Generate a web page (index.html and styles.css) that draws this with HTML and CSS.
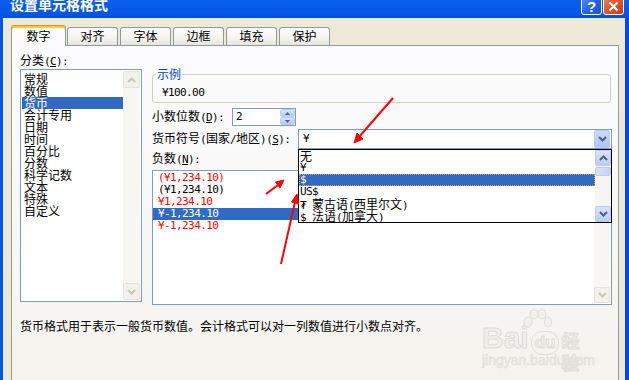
FILE: index.html
```html
<!DOCTYPE html>
<html lang="zh-CN">
<head>
  <meta charset="UTF-8">
  <title>设置单元格格式</title>
  <link rel="stylesheet" href="styles.css">
</head>
<body>

<div class="window">
  <!-- 标题栏 -->
  <div class="titlebar">
    <span class="title">设置单元格格式</span>
    <span class="tbtn help">?</span>
    <span class="tbtn close">
      <svg width="11" height="11" viewBox="0 0 11 11"><path d="M1.5 1.5 L9.5 9.5 M9.5 1.5 L1.5 9.5" stroke="#fff" stroke-width="2.2"/></svg>
    </span>
  </div>

  <div class="dlg">
    <div class="tabs">
      <div class="tab active">数字</div>
      <div class="tab">对齐</div>
      <div class="tab">字体</div>
      <div class="tab">边框</div>
      <div class="tab">填充</div>
      <div class="tab">保护</div>
    </div>

    <div class="panel">
      <div class="cols">
        <!-- 分类 -->
        <div class="left">
          <div class="lbl">分类<span class="n">(<u>C</u>):</span></div>
          <div class="listbox cat">
            <div class="items">
              <div class="item">常规</div>
              <div class="item">数值</div>
              <div class="item sel">货币</div>
              <div class="item">会计专用</div>
              <div class="item">日期</div>
              <div class="item">时间</div>
              <div class="item">百分比</div>
              <div class="item">分数</div>
              <div class="item">科学记数</div>
              <div class="item">文本</div>
              <div class="item">特殊</div>
              <div class="item">自定义</div>
            </div>
            <div class="vs off">
              <span class="sb"><svg width="9" height="6" viewBox="0 0 9 6"><path d="M1 5 L4.5 1.5 L8 5" fill="none" stroke="#C9C7BA" stroke-width="2"/></svg></span>
              <span class="sb"><svg width="9" height="6" viewBox="0 0 9 6"><path d="M1 1 L4.5 4.5 L8 1" fill="none" stroke="#C9C7BA" stroke-width="2"/></svg></span>
            </div>
          </div>
        </div>

        <!-- 右侧 -->
        <div class="right">
          <fieldset class="sample">
            <legend>示例</legend>
            <div class="n">¥100.00</div>
          </fieldset>

          <div class="row dec">
            <span class="lbl">小数位数<span class="n">(<u>D</u>):</span></span>
            <div class="spin">
              <span class="n val">2</span>
              <div class="spinbtn">
                <span><svg width="5" height="3" viewBox="0 0 5 3"><path d="M0 3 L2.5 0 L5 3Z" fill="#4D6185"/></svg></span>
                <span><svg width="5" height="3" viewBox="0 0 5 3"><path d="M0 0 L2.5 3 L5 0Z" fill="#4D6185"/></svg></span>
              </div>
            </div>
          </div>

          <div class="row cur">
            <span class="lbl">货币符号<span class="n">(</span>国家<span class="n">/</span>地区<span class="n">)(<u>S</u>):</span></span>
            <div class="combo">
              <span class="n val">¥</span>
              <span class="cbtn"><svg width="9" height="6" viewBox="0 0 9 6"><path d="M1 1 L4.5 4.5 L8 1" fill="none" stroke="#4D6185" stroke-width="2"/></svg></span>

              <div class="drop">
                <div class="items">
                  <div class="item">无</div>
                  <div class="item n">¥</div>
                  <div class="item n sel">$</div>
                  <div class="item n">US$</div>
                  <div class="item"><span class="n">₮ </span>蒙古语<span class="n">(</span>西里尔文<span class="n">)</span></div>
                  <div class="item"><span class="n">$ </span>法语<span class="n">(</span>加拿大<span class="n">)</span></div>
                </div>
                <div class="vs on">
                  <span class="sb"><svg width="9" height="6" viewBox="0 0 9 6"><path d="M1 5 L4.5 1.5 L8 5" fill="none" stroke="#4D6185" stroke-width="2"/></svg></span>
                  <span class="thumb"></span>
                  <span class="sb"><svg width="9" height="6" viewBox="0 0 9 6"><path d="M1 1 L4.5 4.5 L8 1" fill="none" stroke="#4D6185" stroke-width="2"/></svg></span>
                </div>
              </div>
            </div>
          </div>

          <div class="lbl neglbl">负数<span class="n">(<u>N</u>):</span></div>
          <div class="listbox neg">
            <div class="items">
              <div class="item n red">(¥1,234.10)</div>
              <div class="item n">(¥1,234.10)</div>
              <div class="item n red">¥1,234.10</div>
              <div class="item n sel">¥-1,234.10</div>
              <div class="item n red">¥-1,234.10</div>
            </div>
            <div class="vs off">
              <span class="sb"><svg width="9" height="6" viewBox="0 0 9 6"><path d="M1 5 L4.5 1.5 L8 5" fill="none" stroke="#C9C7BA" stroke-width="2"/></svg></span>
              <span class="sb"><svg width="9" height="6" viewBox="0 0 9 6"><path d="M1 1 L4.5 4.5 L8 1" fill="none" stroke="#C9C7BA" stroke-width="2"/></svg></span>
            </div>
          </div>
        </div>
      </div>

      <p class="desc">货币格式用于表示一般货币数值。会计格式可以对一列数值进行小数点对齐。</p>
    </div>
  </div>
</div>

<!-- 红色箭头 -->
<svg class="arrows" width="629" height="380" viewBox="0 0 629 380">
  <g stroke="#F00" stroke-width="2" fill="#F00">
    <line x1="393" y1="98" x2="359" y2="137"/>
    <polygon points="354,143 363,139 357,133" stroke-width="1"/>
    <line x1="266" y1="194" x2="278" y2="185"/>
    <polygon points="284,180 280,188 275.5,182" stroke-width="1"/>
    <line x1="281" y1="264" x2="295" y2="202"/>
    <polygon points="297,194 298.5,204 291.5,202" stroke-width="1"/>
  </g>
</svg>

<!-- 水印 -->
<div class="wm">
  <svg class="paw" width="30" height="22" viewBox="0 0 30 22">
    <g fill="#F1F0EC" stroke="#DEDDD8">
      <ellipse cx="6" cy="14" rx="4" ry="5"/>
      <ellipse cx="12" cy="6" rx="4" ry="5"/>
      <ellipse cx="20" cy="6" rx="4" ry="5"/>
      <ellipse cx="26" cy="14" rx="3.5" ry="5"/>
    </g>
  </svg>
  <div class="wm-top">
    <span class="wm-bai">Bai</span><span class="wm-du">du</span><span class="wm-jy">经验</span>
  </div>
  <div class="wm-url">jingyan.baidu.com</div>
</div>

</body>
</html>
```

FILE: styles.css
```css
body {
  margin: 0;
  width: 629px;
  height: 380px;
  overflow: hidden;
  position: relative;
  font-family: "Noto Sans CJK SC", sans-serif;
  font-size: 12px;
  line-height: 12px;
  color: #000;
}
.n {
  font-family: "DejaVu Sans Mono", "Noto Sans CJK SC", monospace;
  font-size: 11px;
  letter-spacing: -0.6px;
}
u {
  text-decoration-thickness: 1px;
  text-underline-offset: 1px;
}

.window {
  display: flex;
  flex-direction: column;
  height: 380px;
}

/* 标题栏 */
.titlebar {
  flex: none;
  height: 18px;
  display: flex;
  align-items: flex-start;
  padding-left: 10px;
  overflow: hidden;
  background: linear-gradient(#0B5FEB, #0558E8 65%, #0250DC);
}
.title {
  color: #fff;
  font-weight: bold;
  font-size: 14px;
  line-height: 14px;
  margin-top: -3px;
}
.tbtn {
  width: 21px;
  height: 21px;
  box-sizing: border-box;
  margin-top: -6px;
  padding-top: 4px;
  border: 1px solid #fff;
  border-radius: 3px;
  display: flex;
  align-items: center;
  justify-content: center;
  color: #fff;
  font: bold 15px/15px "Liberation Sans", sans-serif;
}
.help {
  margin-left: auto;
  background: linear-gradient(135deg, #5A95F7, #2463E6 55%, #1B52D6);
}
.close {
  margin-left: 1px;
  margin-right: 5px;
  background: linear-gradient(135deg, #EE8A63, #E0562C 50%, #C53F1A);
}

/* 对话框主体 */
.dlg {
  flex: 1;
  min-height: 0;
  display: flex;
  flex-direction: column;
  background: #ECE9D8;
  border-left: 3px solid #0454E6;
  border-right: 4px solid #0349DB;
  padding: 7px 6px 0 8px;
}
.tabs {
  flex: none;
  height: 20px;
  display: flex;
  align-items: flex-end;
}
.tab {
  width: 51px;
  height: 18px;
  box-sizing: border-box;
  margin-left: 2px;
  padding-top: 2px;
  text-align: center;
  border: 1px solid #919B9C;
  border-bottom: 0;
  border-radius: 3px 3px 0 0;
  background: linear-gradient(#FFFFFF, #F4F3EF 60%, #E6E4DC);
}
.tab.active {
  width: 55px;
  height: 21px;
  margin-left: 0;
  margin-right: -1px;
  margin-bottom: -1px;
  padding-top: 4px;
  border-top: 1px solid #E68B2C;
  box-shadow: inset 0 2px #FFC83C;
  background: #FCFCFE;
  position: relative;
  z-index: 1;
}

.panel {
  flex: 1;
  border: 1px solid #919B9C;
  border-bottom: 0;
  padding: 8px 6px 0 8px;
  background: linear-gradient(#FCFCFE, #F4F3EE 330px);
}
.cols {
  display: grid;
  grid-template-columns: 122px 460px;
  column-gap: 10px;
}

/* 列表框 */
.listbox {
  box-sizing: border-box;
  display: flex;
  border: 1px solid #7F9DB9;
  background: #fff;
  padding: 1px;
}
.items {
  flex: 1;
  min-width: 0;
}
.item {
  height: 12px;
  white-space: nowrap;
}
.item.sel {
  background: #316AC5;
  color: #fff;
}
.red {
  color: #F00;
}

.cat {
  height: 233px;
  margin-top: 1px;
}
.cat .items {
  padding-top: 2px;
}
.cat .item {
  padding-left: 2px;
}

/* 滚动条 */
.vs {
  display: flex;
  flex-direction: column;
  justify-content: space-between;
  width: 17px;
  flex: none;
}
.vs.off {
  background: #F8F7F4;
}
.vs .sb {
  height: 17px;
  box-sizing: border-box;
  display: flex;
  align-items: center;
  justify-content: center;
  border-radius: 2px;
}
.vs.off .sb {
  background: #F2F1EC;
  border: 1px solid #E6E4DA;
}
.vs.on {
  width: 16px;
  justify-content: flex-start;
  background: #F6F5F1;
}
.vs.on .sb {
  height: 16px;
  border: 1px solid #BCCDF5;
  background: linear-gradient(#D9E3FC, #BACCF6);
}
.vs.on .sb:last-child {
  margin-top: auto;
}
.thumb {
  height: 7px;
  margin-top: 1px;
  border: 1px solid #BCCDF5;
  border-radius: 2px;
  background: linear-gradient(90deg, #D6E1FC, #C4D4FA);
}

/* 示例 */
.sample {
  margin: 14px 1px 0 0;
  padding: 7px 9px 3px;
  border: 1px solid #D0D0BF;
  border-radius: 3px;
  min-width: 0;
}
.sample legend {
  padding: 0 1px;
  margin-left: -6px;
  color: #0046D5;
  line-height: 12px;
}

.row {
  display: flex;
  align-items: center;
}
.dec {
  margin-top: 5px;
  height: 18px;
}
.dec .lbl {
  width: 80px;
}
.spin {
  width: 64px;
  height: 18px;
  box-sizing: border-box;
  border: 1px solid #7F9DB9;
  background: #fff;
  display: flex;
  align-items: center;
  padding-left: 3px;
}
.val {
  flex: 1;
}
.spinbtn {
  width: 15px;
  height: 16px;
  display: flex;
  flex-direction: column;
}
.spinbtn span {
  flex: 1;
  display: flex;
  align-items: center;
  justify-content: center;
  border: 1px solid #BCCDF5;
  border-radius: 2px;
  background: linear-gradient(#D9E3FC, #B5C8F4);
}

.cur {
  margin-top: 3px;
  height: 20px;
}
.cur .lbl {
  width: 146px;
}
.combo {
  position: relative;
  width: 314px;
  height: 20px;
  box-sizing: border-box;
  border: 1px solid #7F9DB9;
  background: #fff;
  display: flex;
  align-items: center;
  padding-left: 4px;
}
.cbtn {
  width: 16px;
  height: 18px;
  box-sizing: border-box;
  margin-right: 1px;
  display: flex;
  align-items: center;
  justify-content: center;
  border: 1px solid #B9CBF3;
  border-radius: 2px;
  background: linear-gradient(#CCD9FB, #AFC3F4);
}

/* 下拉列表 */
.drop {
  position: absolute;
  left: -1px;
  right: -1px;
  top: calc(100% + 1px);
  height: 74px;
  box-sizing: border-box;
  border: 1px solid #000;
  background: #fff;
  display: flex;
  z-index: 5;
}
.drop .item {
  padding-left: 1px;
}
.drop .item.sel {
  outline: 1px dotted #E8A040;
  outline-offset: -1px;
}

.neglbl {
  margin-top: 3px;
}
.neg {
  height: 135px;
  margin-top: 4px;
  padding: 1px 1px 1px 0;
}
.neg .item {
  padding-left: 5px;
}
.neg .vs {
  width: 16px;
}
.neg .vs .sb {
  height: 16px;
}

.desc {
  margin: 15px 0 0;
}

/* 叠加层 */
.arrows {
  position: absolute;
  left: 0;
  top: 0;
  pointer-events: none;
  z-index: 10;
}
.wm {
  position: absolute;
  left: 482px;
  top: 306px;
  width: 112px;
  z-index: 9;
  color: #F0EFEB;
}
.paw {
  position: absolute;
  left: 40px;
  top: 2px;
}
.wm-top {
  display: flex;
  align-items: baseline;
  margin-top: 18px;
  height: 28px;
}
.wm-bai {
  font: bold 30px/28px "Liberation Sans", sans-serif;
  -webkit-text-stroke: 1px #DEDDD8;
}
.wm-du {
  font: bold 17px/22px "Liberation Sans", sans-serif;
  margin-left: 2px;
  padding: 0 3px;
  border-radius: 11px;
  border: 1px solid #DEDDD8;
  -webkit-text-stroke: 1px #DEDDD8;
}
.wm-jy {
  font: bold 18px/22px "Noto Sans CJK SC", sans-serif;
  margin-left: 2px;
  -webkit-text-stroke: 1px #DEDDD8;
}
.wm-url {
  font: 14px/14px "Liberation Sans", sans-serif;
  margin-top: 1px;
  -webkit-text-stroke: 0.6px #DEDDD8;
}
```
